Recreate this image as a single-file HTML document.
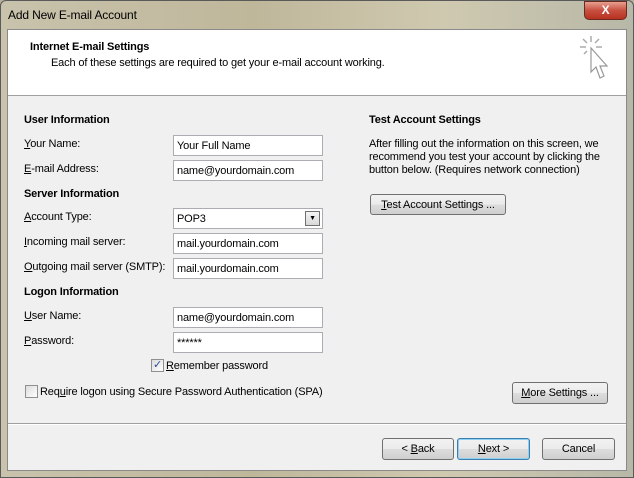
<!DOCTYPE html>
<html><head><style>
*{margin:0;padding:0;box-sizing:border-box}
body{width:634px;height:478px;overflow:hidden;background:#b9b29a;font-family:"Liberation Sans",sans-serif;font-size:11px;letter-spacing:-0.15px;color:#000;position:relative}
.a{position:absolute}
.frame{left:0;top:0;width:634px;height:478px;background:linear-gradient(90deg,#c9c3ad,#bfb79a 40%,#cfc9b0 70%,#b8b8a8);border:1px solid #5a5a5a;border-radius:6px 6px 0 0}
.client{left:7px;top:29px;width:620px;height:442px;background:#f0f0f0;border:1px solid #8a8a8a}
.hdr{left:8px;top:30px;width:618px;height:66px;background:#fff;border-bottom:1px solid #a0a0a0}
.b{font-weight:bold}
.inp{background:#fff;border:1px solid #abadb3;height:21px;width:150px;padding:4px 0 0 3px}
.btn{border:1px solid #707070;border-radius:3px;background:linear-gradient(#f2f2f2,#ebebeb 50%,#dddddd 51%,#cfcfcf);height:21px;text-align:center;padding-top:4px}
u{text-decoration:underline}
.cb{width:13px;height:13px;border:1px solid #8f8f8f;background:linear-gradient(135deg,#dcdcdc,#fff)}
</style></head><body>
<div class="a frame"></div>
<div class="a" style="left:8px;top:8px;font-size:12px;color:#000">Add New E-mail Account</div>
<div class="a" style="left:584px;top:1px;width:43px;height:19px;border-radius:0 0 5px 5px;background:linear-gradient(#e8a090,#c75040 50%,#b83020);border:1px solid #6b2a20;color:#fff;text-align:center;font-weight:bold;font-size:12px;line-height:17px">X</div>
<div class="a client"></div>
<div class="a hdr"></div>
<div class="a b" style="left:30px;top:41px;font-size:11px">Internet E-mail Settings</div>
<div class="a" style="left:51px;top:57px">Each of these settings are required to get your e-mail account working.</div>
<svg class="a" style="left:576px;top:34px" width="36" height="50"><g stroke="#aaa" stroke-width="1.5" fill="none"><line x1="15" y1="2" x2="15" y2="8"/><line x1="4" y1="13" x2="10" y2="13"/><line x1="20" y1="13" x2="26" y2="13"/><line x1="7" y1="5" x2="11" y2="9"/><line x1="23" y1="5" x2="19" y2="9"/><line x1="8" y1="20" x2="11" y2="17"/></g><path d="M15 14 L15 38 L20 33 L24 44 L28 42 L24 32 L31 32 Z" fill="#fff" stroke="#999" stroke-width="1.2"/></svg>

<div class="a b" style="left:24px;top:114px">User Information</div>
<div class="a" style="left:24px;top:138px"><u>Y</u>our Name:</div>
<div class="a inp" style="left:173px;top:135px">Your Full Name</div>
<div class="a" style="left:24px;top:163px"><u>E</u>-mail Address:</div>
<div class="a inp" style="left:173px;top:160px">name@yourdomain.com</div>
<div class="a b" style="left:24px;top:188px">Server Information</div>
<div class="a" style="left:24px;top:211px"><u>A</u>ccount Type:</div>
<div class="a inp" style="left:173px;top:208px">POP3</div>
<div class="a" style="left:305px;top:211px;width:15px;height:15px;border:1px solid #707070;background:linear-gradient(#f4f4f4,#d8d8d8);font-size:7px;text-align:center;line-height:14px">&#9660;</div>
<div class="a" style="left:24px;top:236px"><u>I</u>ncoming mail server:</div>
<div class="a inp" style="left:173px;top:233px">mail.yourdomain.com</div>
<div class="a" style="left:24px;top:261px"><u>O</u>utgoing mail server (SMTP):</div>
<div class="a inp" style="left:173px;top:258px">mail.yourdomain.com</div>
<div class="a b" style="left:24px;top:286px">Logon Information</div>
<div class="a" style="left:24px;top:310px"><u>U</u>ser Name:</div>
<div class="a inp" style="left:173px;top:307px">name@yourdomain.com</div>
<div class="a" style="left:24px;top:335px"><u>P</u>assword:</div>
<div class="a inp" style="left:173px;top:332px">******</div>
<div class="a cb" style="left:151px;top:359px;color:#2a4a9a;font-size:11px;line-height:11px;text-align:center">&#10003;</div>
<div class="a" style="left:166px;top:360px"><u>R</u>emember password</div>
<div class="a cb" style="left:25px;top:385px"></div>
<div class="a" style="left:40px;top:386px">Req<u>u</u>ire logon using Secure Password Authentication (SPA)</div>

<div class="a b" style="left:369px;top:114px">Test Account Settings</div>
<div class="a" style="left:369px;top:138px;width:250px;line-height:13px">After filling out the information on this screen, we recommend you test your account by clicking the button below. (Requires network connection)</div>
<div class="a btn" style="left:370px;top:194px;width:136px"><u>T</u>est Account Settings ...</div>
<div class="a btn" style="left:512px;top:382px;width:96px;height:22px"><u>M</u>ore Settings ...</div>

<div class="a" style="left:8px;top:423px;width:618px;border-top:1px solid #a0a0a0;border-bottom:1px solid #fff"></div>
<div class="a btn" style="left:382px;top:438px;width:72px;height:22px">&lt; <u>B</u>ack</div>
<div class="a btn" style="left:457px;top:438px;width:73px;height:22px;border-color:#3c7fb1;box-shadow:inset 0 0 0 1px #8fd0f0"><u>N</u>ext &gt;</div>
<div class="a btn" style="left:542px;top:438px;width:73px;height:22px">Cancel</div>
</body></html>
